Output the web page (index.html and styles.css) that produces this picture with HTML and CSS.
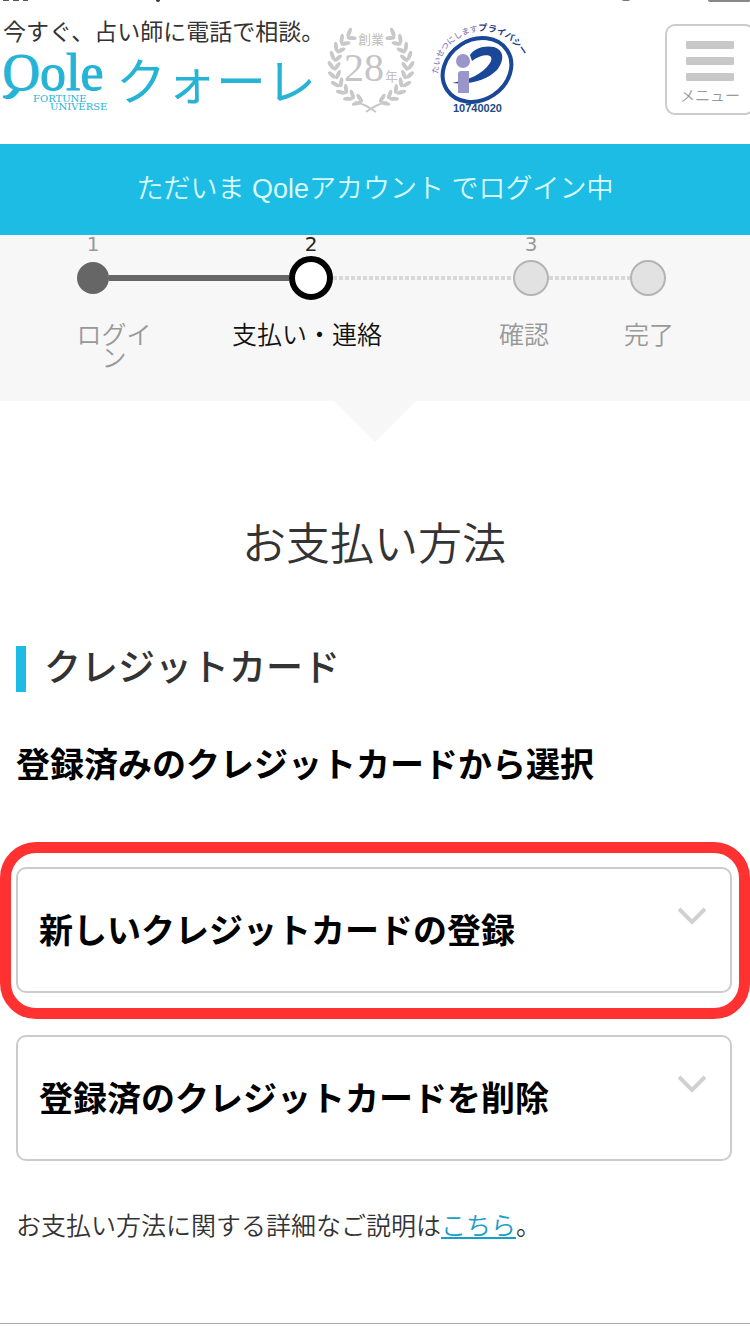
FILE: index.html
```html
<!DOCTYPE html>
<html lang="ja">
<head>
    <meta charset="UTF-8">
    <meta name="viewport" content="width=device-width, initial-scale=1.0">
    <title>お支払い方法 | Qole クォーレ</title>
    <link rel="stylesheet" href="styles.css">
</head>
<body>
    <!-- Header -->
    <header class="header">
        <svg class="status status-left" width="170" height="3" viewBox="0 0 170 3" aria-hidden="true">
            <path d="M3 0h6v1H3zM13 0h6v1h-6zM23 0h5v1h-5z" fill="#555"/>
            <circle cx="158" cy="0" r="2" fill="#333"/>
        </svg>
        <svg class="status status-right" width="130" height="3" viewBox="0 0 130 3" aria-hidden="true">
            <ellipse cx="6" cy="0" rx="4" ry="1" fill="#777"/>
            <path d="M88 0h42v1q0 1-2 1H91q-3 0-3-2z" fill="#888"/>
        </svg>

        <a href="#" class="logo" aria-label="Qole クォーレ">
            <svg width="326" height="100" viewBox="0 0 326 100">
                <text class="logo-tagline" x="3" y="24">今すぐ、占い師に電話で相談。</text>
                <!-- the Q is mirrored so its tail points left -->
                <text class="logo-name" x="-40" y="74" transform="scale(-1 1)">Q</text>
                <text class="logo-name" x="40" y="74">ole</text>
                <text class="logo-sub" x="33" y="86">FORTUNE</text>
                <text class="logo-sub" x="50" y="94">UNIVERSE</text>
                <text class="logo-kana" x="116" y="84">クォーレ</text>
            </svg>
        </a>

        <svg class="laurel" width="90" height="94" viewBox="0 0 90 94" role="img" aria-label="創業28年">
            <defs>
                <g id="leaves">
                    <ellipse cx="-40" cy="0" rx="2" ry="5" transform="rotate(-35 -40 0)"/>
                    <ellipse cx="-34" cy="1" rx="2" ry="5" transform="rotate(35 -34 1)"/>
                </g>
                <g id="branch">
                    <use href="#leaves" transform="rotate(-69)"/>
                    <use href="#leaves" transform="rotate(-55)"/>
                    <use href="#leaves" transform="rotate(-41)"/>
                    <use href="#leaves" transform="rotate(-27)"/>
                    <use href="#leaves" transform="rotate(-13)"/>
                    <use href="#leaves" transform="rotate(1)"/>
                    <use href="#leaves" transform="rotate(15)"/>
                    <use href="#leaves" transform="rotate(29)"/>
                    <use href="#leaves" transform="rotate(43)"/>
                    <use href="#leaves" transform="rotate(57)"/>
                    <path d="M-16 36Q-6 38 5 46" fill="none" stroke="#c8c8c8" stroke-width="2"/>
                </g>
            </defs>
            <g fill="#c8c8c8" transform="translate(45 44)">
                <use href="#branch"/>
                <use href="#branch" transform="scale(-1 1)"/>
            </g>
            <text class="laurel-small" x="32" y="22">創業</text>
            <text class="laurel-number" x="18" y="59">28</text>
            <text class="laurel-small" x="59" y="59">年</text>
        </svg>

        <svg class="privacy" width="104" height="100" viewBox="0 0 104 100" role="img" aria-label="プライバシーマーク">
            <path id="arc" d="M8 54C9 28 29 13 50 11C69 10 84 20 94 38" fill="none"/>
            <text class="privacy-text"><textPath href="#arc">たいせつにします<tspan class="privacy-bold">プライバシー</tspan></textPath></text>
            <ellipse cx="47" cy="50" rx="36" ry="30" transform="rotate(-33 47 50)" fill="#fff" stroke="#1a4798" stroke-width="4"/>
            <path d="M40 35C44 28 55 25 64 27C74 30 75 40 67 50C58 59 42 65 22 63C38 60 52 55 60 43C66 33 52 33 42 41Z" fill="#1a4798"/>
            <circle cx="33" cy="41" r="7" fill="#9a96cc"/>
            <path d="M31 51h8v22H28V54q0-3 3-3z" fill="#9a96cc"/>
            <text class="privacy-number" x="23" y="92">10740020</text>
        </svg>

        <button type="button" class="menu">
            <span class="menu-bar"></span>
            <span class="menu-bar"></span>
            <span class="menu-bar"></span>
            <span class="menu-label">メニュー</span>
        </button>
    </header>

    <p class="login-banner">ただいま Qoleアカウント でログイン中</p>

    <!-- Progress -->
    <section class="steps">
        <div class="track">
            <div class="step done"><span class="num">1</span><span class="dot"></span></div>
            <div class="line solid"></div>
            <div class="step current"><span class="num">2</span><span class="dot"></span></div>
            <div class="line"></div>
            <div class="step"><span class="num">3</span><span class="dot"></span></div>
            <div class="line short"></div>
            <div class="step"><span class="dot"></span></div>
        </div>
        <ol class="labels">
            <li>ログイン</li>
            <li class="active">支払い・連絡</li>
            <li>確認</li>
            <li>完了</li>
        </ol>
    </section>

    <!-- Payment -->
    <main>
        <h1>お支払い方法</h1>
        <h2>クレジットカード</h2>
        <h3>登録済みのクレジットカードから選択</h3>

        <div class="cards">
            <div class="card highlight">
                <button type="button" class="card-button">
                    新しいクレジットカードの登録
                    <svg class="chevron" width="28" height="18" viewBox="0 0 28 18" aria-hidden="true">
                        <path d="M1 2L14 15L27 2" fill="none" stroke="#d0d0d0" stroke-width="4"/>
                    </svg>
                </button>
            </div>
            <div class="card">
                <button type="button" class="card-button">
                    登録済のクレジットカードを削除
                    <svg class="chevron" width="28" height="18" viewBox="0 0 28 18" aria-hidden="true">
                        <path d="M1 2L14 15L27 2" fill="none" stroke="#d0d0d0" stroke-width="4"/>
                    </svg>
                </button>
            </div>
        </div>

        <p class="note">お支払い方法に関する詳細なご説明は<a href="#">こちら</a>。</p>
    </main>

    <footer class="footer"></footer>
</body>
</html>
```

FILE: styles.css
```css
* {
    margin: 0;
    padding: 0;
    box-sizing: border-box;
}

body {
    font-family: 'Liberation Sans', 'Noto Sans CJK JP', sans-serif;
    background: #fff;
    color: #333;
}

/* Header */
.header {
    position: relative;
    display: flex;
    align-items: flex-start;
    height: 144px;
    padding-top: 16px;
    overflow: hidden;
}

.header svg {
    display: block;
    flex-shrink: 0;
}

.header .status {
    position: absolute;
    top: 0;
}

.status-left {
    left: 0;
}

.status-right {
    right: 0;
}

.logo-tagline {
    font-family: 'Noto Sans CJK JP', sans-serif;
    font-size: 23px;
    fill: #333;
}

.logo-name {
    font-family: 'Liberation Serif', serif;
    font-size: 52px;
    fill: #25b3d6;
    stroke: #25b3d6;
}

.logo-sub {
    font-family: 'DejaVu Serif', serif;
    font-size: 10px;
    fill: #25b3d6;
}

.logo-kana {
    font-family: 'Noto Sans CJK JP', sans-serif;
    font-size: 50px;
    fill: #25b3d6;
}

.laurel-small {
    font-family: 'Noto Sans CJK JP', sans-serif;
    font-weight: 350;
    font-size: 13px;
    fill: #bbb;
}

.laurel-number {
    font-family: 'Liberation Serif', serif;
    font-size: 40px;
    fill: #c4c4c4;
}

.laurel {
    margin-top: 6px;
}

.privacy {
    margin: 4px 0 0 14px;
}

.privacy-text {
    font-family: 'Noto Sans CJK JP', sans-serif;
    font-weight: 500;
    font-size: 8px;
    fill: #8a85bd;
}

.privacy-bold {
    font-weight: 700;
    font-size: 9px;
    fill: #1f3f80;
}

.privacy-number {
    font-family: 'Liberation Sans', sans-serif;
    font-weight: bold;
    font-size: 11px;
    fill: #234a86;
}

.menu {
    display: flex;
    flex-direction: column;
    align-items: center;
    gap: 8px;
    width: 90px;
    height: 91px;
    margin: 8px -5px 0 auto;
    padding-top: 15px;
    background: #fff;
    border: 2px solid #ccc;
    border-radius: 10px;
    cursor: pointer;
}

.menu-bar {
    width: 48px;
    height: 8px;
    background: #c8c8c8;
    border-radius: 1px;
}

.menu-label {
    font-family: 'Noto Sans CJK JP', sans-serif;
    font-weight: 350;
    font-size: 15px;
    line-height: 12px;
    color: #999;
}

.login-banner {
    background: #1cbce4;
    color: #d8fbff;
    font-size: 27px;
    line-height: 91px;
    text-align: center;
    font-weight: 350;
}

/* Progress */
.steps {
    position: relative;
    height: 166px;
    background: #f7f7f7;
}

.steps::after {
    content: '';
    position: absolute;
    top: 100%;
    left: 50%;
    margin-left: -41px;
    border: 41px solid transparent;
    border-top-color: #f7f7f7;
    border-bottom: 0;
}

.track {
    display: flex;
    align-items: flex-end;
    height: 65px;
    padding: 0 84px 0 77px;
}

.step {
    display: flex;
    flex-direction: column;
    align-items: center;
    color: #999;
}

.num {
    font-family: 'DejaVu Sans', sans-serif;
    font-size: 20px;
    line-height: 20px;
    margin-bottom: 2px;
}

.dot {
    width: 36px;
    height: 36px;
    margin: 4px 0;
    background: #e2e2e2;
    border: 2px solid #b4b4b4;
    border-radius: 50%;
}

.done .dot {
    width: 32px;
    height: 32px;
    margin: 6px 0;
    background: #666;
    border: none;
}

.current {
    color: #222;
}

.current .dot {
    width: 44px;
    height: 44px;
    margin: 0;
    background: #fff;
    border: 6px solid #000;
}

.line {
    flex: 180;
    height: 4px;
    margin-bottom: 20px;
    background: repeating-linear-gradient(90deg, #d8d8d8 0 4px, transparent 4px 6px);
}

.line.solid {
    height: 6px;
    margin-bottom: 19px;
    background: #666;
}

.line.short {
    flex: 81;
}

.labels {
    display: grid;
    grid-template-columns: 76px 310fr 124fr 126fr;
    padding: 24px 38px 0 76px;
    list-style: none;
    font-size: 25px;
    line-height: 23px;
    font-weight: 350;
    text-align: center;
    color: #999;
}

.labels .active {
    color: #111;
}

/* Payment */
main {
    padding: 114px 18px 0 16px;
}

h1 {
    font-size: 44px;
    line-height: 60px;
    font-weight: 350;
    text-align: center;
}

h2 {
    margin-top: 71px;
    padding-left: 18px;
    border-left: 10px solid #1cbce4;
    font-size: 37px;
    line-height: 46px;
    font-weight: 500;
}

h3 {
    margin-top: 48px;
    font-size: 34px;
    line-height: 50px;
    font-weight: 700;
    color: #000;
}

.cards {
    display: flex;
    flex-direction: column;
    gap: 42px;
    margin-top: 77px;
}

.card {
    position: relative;
}

.card-button {
    display: flex;
    align-items: center;
    justify-content: space-between;
    width: 100%;
    height: 126px;
    padding: 0 24px 4px 21px;
    background: #fff;
    border: 2px solid #ccc;
    border-radius: 10px;
    font-family: inherit;
    font-size: 34px;
    font-weight: 700;
    color: #000;
    cursor: pointer;
}

.chevron {
    margin-bottom: 24px;
}

.highlight::after {
    content: '';
    position: absolute;
    inset: -25px -18px -26px -16px;
    border: 11px solid #ff3131;
    border-radius: 36px;
    pointer-events: none;
}

.note {
    margin-top: 45px;
    font-size: 25px;
    line-height: 40px;
    font-weight: 350;
}

.note a {
    color: #1a9dc8;
}

.footer {
    height: 11px;
    margin-top: 77px;
    border-top: 1px solid #aaa;
}
```
